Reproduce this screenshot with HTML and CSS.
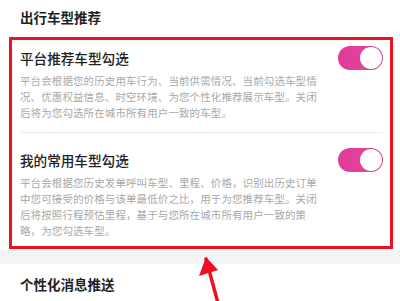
FILE: index.html
```html
<!DOCTYPE html>
<html lang="zh-CN">
<head>
<meta charset="utf-8">
<link rel="stylesheet" href="styles.css">
</head>
<body>
<div class="page">
  <section class="card">
    <h2 class="card-title">出行车型推荐</h2>
    <div class="item">
      <div class="item-head">
        <span class="item-title">平台推荐车型勾选</span>
        <span class="toggle"><span class="knob"></span></span>
      </div>
      <p class="item-desc">平台会根据您的历史用车行为、当前供需情况、当前勾选车型情<br>况、优惠权益信息、时空环境、为您个性化推荐展示车型。关闭<br>后将为您勾选所在城市所有用户一致的车型。</p>
    </div>
    <div class="item last">
      <div class="item-head">
        <span class="item-title">我的常用车型勾选</span>
        <span class="toggle"><span class="knob"></span></span>
      </div>
      <p class="item-desc">平台会根据您历史发单呼叫车型、里程、价格，识别出历史订单<br>中您可接受的价格与该单最低价之比，用于为您推荐车型。关闭<br>后将按照行程预估里程，基于与您所在城市所有用户一致的策<br>略，为您勾选车型。</p>
    </div>
  </section>
  <section class="card card-next">
    <h2 class="card-title">个性化消息推送</h2>
  </section>

  <div class="mark-box"></div>
  <svg class="mark-arrow" width="40" height="50" viewBox="0 0 40 50">
    <line x1="21" y1="8" x2="33" y2="52" stroke="#ee1122" stroke-width="3.5" stroke-linecap="round"/>
    <polygon points="21,6 14,25 33,19" fill="#ee1122"/>
  </svg>
</div>
</body>
</html>
```

FILE: styles.css
```css
* { box-sizing: border-box; }
html, body { margin: 0; padding: 0; }
body {
  width: 400px;
  height: 301px;
  overflow: hidden;
  background: #f4f4f6;
  font-family: "Noto Sans CJK SC", "Noto Sans", sans-serif;
}
.page {
  position: relative;
  width: 400px;
  height: 301px;
}
.card {
  background: #ffffff;
}
.card-title {
  margin: 0;
  padding: 7px 20px 4px;
  font-size: 13.5px;
  line-height: 20px;
  font-weight: 700;
  color: #1f1f1f;
}
.card-next {
  margin-top: 14px;
  height: 40px;
  padding-top: 3px;
}
.item {
  margin: 0 17px 0 20px;
  padding: 15px 0 11px;
  border-bottom: 1px solid #ececec;
}
.item.last { border-bottom: none; }
.item-head {
  display: flex;
  align-items: center;
  justify-content: space-between;
  height: 24px;
}
.item-title {
  font-size: 13.6px;
  line-height: 20px;
  font-weight: 500;
  color: #222222;
}
.toggle {
  position: relative;
  display: block;
  width: 45px;
  height: 24px;
  border-radius: 12px;
  background: linear-gradient(90deg, #e03b98, #e4479f);
}
.knob {
  position: absolute;
  right: 1px;
  top: 1px;
  width: 22px;
  height: 22px;
  border-radius: 50%;
  background: #ffffff;
  box-shadow: 0 0 0 0.5px #c0488a;
}
.item-desc {
  margin: 3px 0 0;
  font-size: 10.5px;
  letter-spacing: 0.1px;
  line-height: 16px;
  color: #a8a8a8;
  white-space: nowrap;
}
.mark-box {
  position: absolute;
  left: 9px;
  top: 37px;
  width: 384px;
  height: 212px;
  border: 3px solid #ee1122;
}
.mark-arrow {
  position: absolute;
  left: 185px;
  top: 251px;
  overflow: visible;
}
```
